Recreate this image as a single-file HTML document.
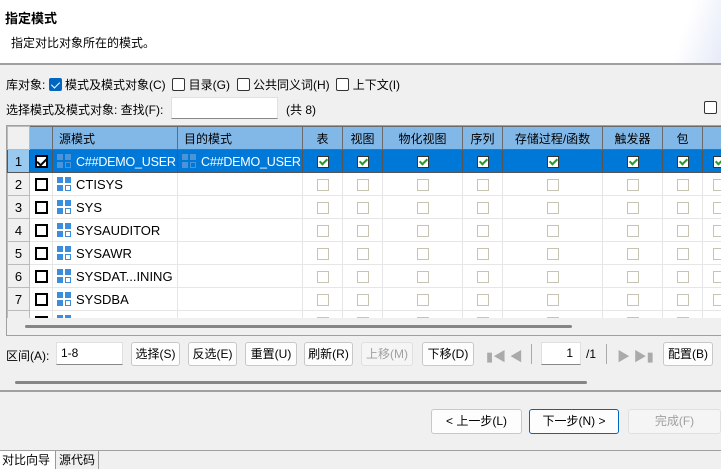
<!DOCTYPE html><html><head><meta charset="utf-8"><style>
*{box-sizing:border-box;margin:0;padding:0}
body{width:721px;height:469px;overflow:hidden;background:#f0f0f0;font-family:"Liberation Sans","Noto Sans CJK SC",sans-serif;font-size:12px;color:#000;position:relative}
.a{position:absolute;white-space:nowrap}
.hdr{left:0;top:0;width:721px;height:65px;background:#fff;border-bottom:2px solid #a0a0a0}
.cb{display:inline-block;width:13px;height:13px;border:1px solid #333;border-radius:2px;vertical-align:-2px;background:#fff}
.cbc{background:#0067c0;border-color:#0067c0;position:relative}
.cbc:after{content:"";position:absolute;left:3px;top:1px;width:4px;height:7px;border:solid #fff;border-width:0 1.5px 1.5px 0;transform:rotate(45deg)}
table{border-collapse:collapse;table-layout:fixed}
td{height:23px;border:1px solid #e6e6e6;text-align:center;padding:0;overflow:hidden;white-space:nowrap;font-size:13px}
th{height:23px;background:#82b8e8;border:1px solid #6a6a6a;font-weight:normal;text-align:center}
.rn{background:#f0f0f0;border-color:#bbb}
.sel td{background:#0078d7;color:#fff;border-color:#555}
.sel td.l{font-size:12.5px;letter-spacing:-0.2px}
.sel td.rn{background:#99c9ef;color:#000}
.bx{display:inline-block;width:13px;height:13px;border:2px solid #000;vertical-align:-2px;background:#fff}
.bxc{position:relative}
.bxc:after{content:"";position:absolute;left:2px;top:-1px;width:4px;height:8px;border:solid #000;border-width:0 2px 2px 0;transform:rotate(45deg)}
.gc{display:inline-block;width:12px;height:12px;border:1px solid #c8c4b4;vertical-align:-2px;background:#fff}
.gcc{border-color:#333;position:relative}
.gcc:after{content:"";position:absolute;left:3px;top:0px;width:3px;height:6px;border:solid #2a9a2a;border-width:0 2px 2px 0;transform:rotate(45deg)}
.ic{display:inline-block;width:15px;height:15px;vertical-align:-3px;margin:0 4px 0 4px;position:relative}
.ic i{position:absolute;width:6px;height:6px;background:#3c8ddc}
.ic i.o{background:#fff;border:1px solid #3c8ddc}
.sel .ic i{background:#4c94d8}.sel .ic i.o{background:#0078d7;border-color:#4c94d8}
td.l{text-align:left}
.btn{position:absolute;top:342px;height:24px;border:1px solid #c8c8c8;border-radius:3px;background:#fdfdfd;text-align:center;line-height:22px}
.in{position:absolute;background:#fff;border:1px solid #e0e0e0;border-bottom:1px solid #888}
</style></head><body>
<div class="a hdr"></div>
<div style="position:absolute;right:0;top:0;width:60px;height:63px;background:linear-gradient(110deg,#fff 40%,#e6ebf8 100%)"></div>
<div class="a" style="left:5px;top:8px;font-weight:bold;font-size:13px">指定模式</div>
<div class="a" style="left:11px;top:34px">指定对比对象所在的模式。</div>
<div class="a" style="left:6px;top:76px">库对象: <span class="cb cbc"></span> 模式及模式对象(C) &nbsp;<span class="cb"></span> 目录(G) &nbsp;<span class="cb"></span> 公共同义词(H) &nbsp;<span class="cb"></span> 上下文(I)</div>
<div class="a" style="left:6px;top:101px">选择模式及模式对象: 查找(F):</div>
<div class="in" style="left:171px;top:97px;width:107px;height:22px"></div>
<div class="a" style="left:286px;top:101px">(共 8)</div>
<div class="a" style="left:704px;top:101px"><span class="cb"></span></div>
<div style="position:absolute;left:6px;top:125px;width:720px;height:211px;border:1px solid #a0a0a0;background:#fff;overflow:hidden">
<table style="width:760px">
<colgroup><col style="width:22px"><col style="width:23px"><col style="width:125px"><col style="width:125px"><col style="width:40px"><col style="width:40px"><col style="width:80px"><col style="width:40px"><col style="width:100px"><col style="width:60px"><col style="width:40px"><col style="width:65px"></colgroup>
<tr><th style="background:#f0f0f0;border-color:#bbb"></th><th></th><th style="text-align:left;padding-left:6px">源模式</th><th style="text-align:left;padding-left:6px">目的模式</th><th>表</th><th>视图</th><th>物化视图</th><th>序列</th><th>存储过程/函数</th><th>触发器</th><th>包</th><th>类</th></tr>
<tr class="sel"><td class="rn">1</td><td><span class="bx bxc"></span></td><td class="l"><span class="ic"><i style="left:0;top:0"></i><i style="left:8px;top:0"></i><i style="left:0;top:8px"></i><i class="o" style="left:8px;top:8px"></i></span>C##DEMO_USER</td><td class="l"><span class="ic"><i style="left:0;top:0"></i><i style="left:8px;top:0"></i><i style="left:0;top:8px"></i><i class="o" style="left:8px;top:8px"></i></span>C##DEMO_USER</td><td><span class="gc gcc"></span></td><td><span class="gc gcc"></span></td><td><span class="gc gcc"></span></td><td><span class="gc gcc"></span></td><td><span class="gc gcc"></span></td><td><span class="gc gcc"></span></td><td><span class="gc gcc"></span></td><td style="text-align:left;padding-left:10px"><span class="gc gcc"></span></td></tr>
<tr><td class="rn">2</td><td><span class="bx"></span></td><td class="l"><span class="ic"><i style="left:0;top:0"></i><i style="left:8px;top:0"></i><i style="left:0;top:8px"></i><i class="o" style="left:8px;top:8px"></i></span>CTISYS</td><td></td><td><span class="gc"></span></td><td><span class="gc"></span></td><td><span class="gc"></span></td><td><span class="gc"></span></td><td><span class="gc"></span></td><td><span class="gc"></span></td><td><span class="gc"></span></td><td style="text-align:left;padding-left:10px"><span class="gc"></span></td></tr>
<tr><td class="rn">3</td><td><span class="bx"></span></td><td class="l"><span class="ic"><i style="left:0;top:0"></i><i style="left:8px;top:0"></i><i style="left:0;top:8px"></i><i class="o" style="left:8px;top:8px"></i></span>SYS</td><td></td><td><span class="gc"></span></td><td><span class="gc"></span></td><td><span class="gc"></span></td><td><span class="gc"></span></td><td><span class="gc"></span></td><td><span class="gc"></span></td><td><span class="gc"></span></td><td style="text-align:left;padding-left:10px"><span class="gc"></span></td></tr>
<tr><td class="rn">4</td><td><span class="bx"></span></td><td class="l"><span class="ic"><i style="left:0;top:0"></i><i style="left:8px;top:0"></i><i style="left:0;top:8px"></i><i class="o" style="left:8px;top:8px"></i></span>SYSAUDITOR</td><td></td><td><span class="gc"></span></td><td><span class="gc"></span></td><td><span class="gc"></span></td><td><span class="gc"></span></td><td><span class="gc"></span></td><td><span class="gc"></span></td><td><span class="gc"></span></td><td style="text-align:left;padding-left:10px"><span class="gc"></span></td></tr>
<tr><td class="rn">5</td><td><span class="bx"></span></td><td class="l"><span class="ic"><i style="left:0;top:0"></i><i style="left:8px;top:0"></i><i style="left:0;top:8px"></i><i class="o" style="left:8px;top:8px"></i></span>SYSAWR</td><td></td><td><span class="gc"></span></td><td><span class="gc"></span></td><td><span class="gc"></span></td><td><span class="gc"></span></td><td><span class="gc"></span></td><td><span class="gc"></span></td><td><span class="gc"></span></td><td style="text-align:left;padding-left:10px"><span class="gc"></span></td></tr>
<tr><td class="rn">6</td><td><span class="bx"></span></td><td class="l"><span class="ic"><i style="left:0;top:0"></i><i style="left:8px;top:0"></i><i style="left:0;top:8px"></i><i class="o" style="left:8px;top:8px"></i></span>SYSDAT...INING</td><td></td><td><span class="gc"></span></td><td><span class="gc"></span></td><td><span class="gc"></span></td><td><span class="gc"></span></td><td><span class="gc"></span></td><td><span class="gc"></span></td><td><span class="gc"></span></td><td style="text-align:left;padding-left:10px"><span class="gc"></span></td></tr>
<tr><td class="rn">7</td><td><span class="bx"></span></td><td class="l"><span class="ic"><i style="left:0;top:0"></i><i style="left:8px;top:0"></i><i style="left:0;top:8px"></i><i class="o" style="left:8px;top:8px"></i></span>SYSDBA</td><td></td><td><span class="gc"></span></td><td><span class="gc"></span></td><td><span class="gc"></span></td><td><span class="gc"></span></td><td><span class="gc"></span></td><td><span class="gc"></span></td><td><span class="gc"></span></td><td style="text-align:left;padding-left:10px"><span class="gc"></span></td></tr>
<tr><td class="rn"></td><td><span class="bx"></span></td><td class="l"><span class="ic"><i style="left:0;top:0"></i><i style="left:8px;top:0"></i><i style="left:0;top:8px"></i><i class="o" style="left:8px;top:8px"></i></span></td><td></td><td><span class="gc"></span></td><td><span class="gc"></span></td><td><span class="gc"></span></td><td><span class="gc"></span></td><td><span class="gc"></span></td><td><span class="gc"></span></td><td><span class="gc"></span></td><td></td></tr>
</table>
<div style="position:absolute;left:0;top:192px;width:720px;height:20px;background:#f0f0f0"></div>
<div style="position:absolute;left:18px;top:199px;width:547px;height:3px;background:#858585;border-radius:2px"></div>
</div>
<div class="a" style="left:6px;top:347px">区间(A):</div>
<div class="in" style="left:56px;top:342px;width:67px;height:23px;padding:3px 4px">1-8</div>
<div class="btn" style="left:131px;width:49px">选择(S)</div>
<div class="btn" style="left:188px;width:49px">反选(E)</div>
<div class="btn" style="left:245px;width:52px">重置(U)</div>
<div class="btn" style="left:304px;width:49px">刷新(R)</div>
<div class="btn" style="left:361px;width:52px;color:#a0a0a0;background:#f5f5f5;border-color:#e0e0e0">上移(M)</div>
<div class="btn" style="left:422px;width:52px">下移(D)</div>
<div class="a" style="left:486px;top:346px;color:#aaa;font-size:13px">▮◀ ◀</div>
<div style="position:absolute;left:531px;top:344px;width:1px;height:20px;background:#aaa"></div>
<div class="in" style="left:541px;top:342px;width:40px;height:23px;text-align:right;padding:3px 7px">1</div>
<div class="a" style="left:586px;top:347px">/1</div>
<div style="position:absolute;left:606px;top:344px;width:1px;height:20px;background:#aaa"></div>
<div class="a" style="left:617px;top:346px;color:#aaa;font-size:13px">▶ ▶▮</div>
<div class="btn" style="left:663px;width:50px">配置(B)</div>
<div style="position:absolute;left:15px;top:381px;width:572px;height:3px;background:#858585;border-radius:2px"></div>
<div style="position:absolute;left:0;top:390px;width:721px;height:2px;background:#a0a0a0"></div>
<div class="btn" style="left:431px;top:409px;width:91px;height:25px;line-height:23px">&lt; 上一步(L)</div>
<div class="btn" style="left:529px;top:409px;width:90px;height:25px;line-height:23px;border-color:#0067c0">下一步(N) &gt;</div>
<div class="btn" style="left:628px;top:409px;width:93px;height:25px;line-height:23px;color:#a0a0a0;background:#f5f5f5;border-color:#e0e0e0">完成(F)</div>
<div style="position:absolute;left:0;top:450px;width:721px;height:1px;background:#a0a0a0"></div>
<div class="a" style="left:0;top:451px;width:55px;height:18px;background:#fff;line-height:18px;padding-left:2px">对比向导</div>
<div class="a" style="left:55px;top:451px;width:44px;height:18px;border-left:1px solid #999;border-right:1px solid #999;line-height:18px;padding-left:3px">源代码</div>
</body></html>
